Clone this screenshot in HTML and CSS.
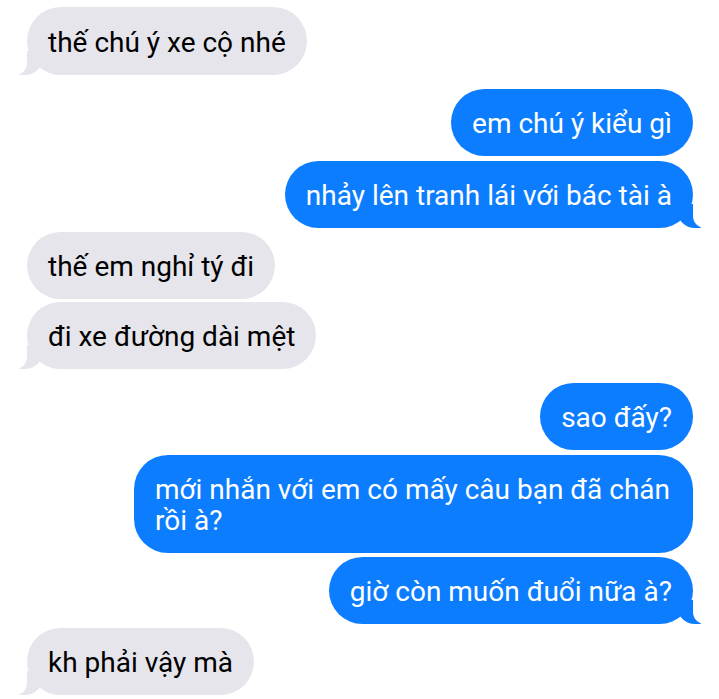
FILE: index.html
```html
<!DOCTYPE html>
<html lang="vi">
<head>
<meta charset="utf-8">
<title>Tin nhắn</title>
<link rel="stylesheet" href="styles.css">
</head>
<body>
<main class="chat">
  <div class="msg recv tail first">thế chú ý xe cộ nhé</div>

  <div class="msg sent group">em chú ý kiểu gì</div>
  <div class="msg sent tail sep">nhảy lên tranh lái với bác tài à</div>

  <div class="msg recv">thế em nghỉ tý đi</div>
  <div class="msg recv tail tight">đi xe đường dài mệt</div>

  <div class="msg sent group">sao đấy?</div>
  <div class="msg sent wide sep">mới nhắn với em có mấy câu bạn đã chán rồi à?</div>
  <div class="msg sent tail">giờ còn muốn đuổi nữa à?</div>

  <div class="msg recv tail">kh phải vậy mà</div>
</main>
</body>
</html>
```

FILE: styles.css
```css
html, body {
  margin: 0;
  padding: 0;
  background: #ffffff;
}

.chat {
  width: 719px;
  height: 699px;
  overflow: hidden;
  box-sizing: border-box;
  padding: 7px 26px 0 27px;
  display: flex;
  flex-direction: column;
  gap: 4px;
  font-family: Roboto, "Noto Sans", "Liberation Sans", sans-serif;
  font-size: 28px;
  line-height: 31px;
}

.msg {
  position: relative;
  box-sizing: border-box;
  max-width: 559px;
  padding: 19px 21px 17px 21px;
  border-radius: 34px;
}

.first {
  padding-top: 20px;
}

.recv {
  align-self: flex-start;
  background: #e6e5eb;
  color: #000000;
}

.sent {
  align-self: flex-end;
  background: #0b7dfe;
  color: #ffffff;
}

.group {
  margin-top: 10px;
}

.sep {
  margin-top: 1px;
}

.tight {
  margin-top: -1px;
}

.wide {
  width: 559px;
}

/* bubble tails */
.tail::before,
.tail::after {
  content: "";
  position: absolute;
  bottom: 0;
  height: 24px;
}

.recv.tail::before {
  left: -8px;
  width: 24px;
  background: #e6e5eb;
  border-bottom-right-radius: 18px;
}

.recv.tail::after {
  left: -12px;
  width: 12px;
  background: #ffffff;
  border-bottom-right-radius: 12px;
}

.sent.tail::before {
  right: -8px;
  width: 24px;
  background: #0b7dfe;
  border-bottom-left-radius: 18px;
}

.sent.tail::after {
  right: -12px;
  width: 12px;
  background: #ffffff;
  border-bottom-left-radius: 12px;
}
```
